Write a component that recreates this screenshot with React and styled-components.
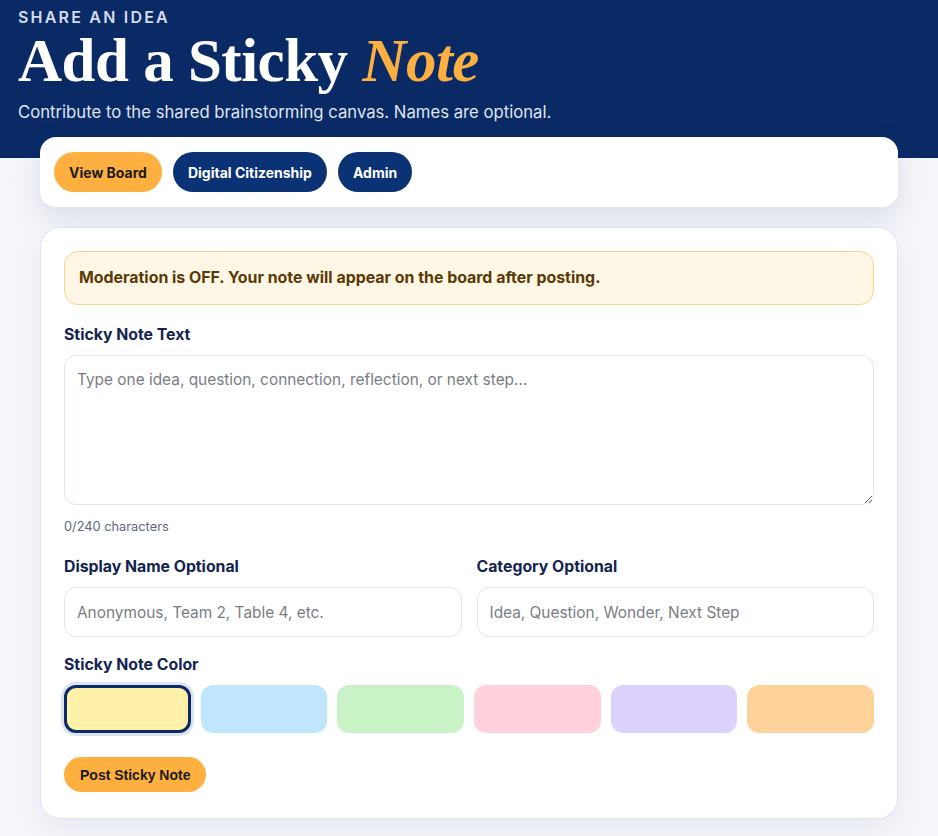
import { useState } from "react";
import styled, { createGlobalStyle } from "styled-components";

const GlobalStyle = createGlobalStyle`
  * { box-sizing: border-box; }
  body {
    margin: 0;
    background: #f5f6fb;
    font-family: "Inter", "Noto Sans", sans-serif;
    color: #13244f;
  }
`;

const Hero = styled.header`
  background: #0a2a66;
  padding: 7px 18px 36px;
`;

const Eyebrow = styled.div`
  font-size: 16px;
  font-weight: 600;
  letter-spacing: 2.2px;
  color: #d5dcec;
  text-transform: uppercase;
  line-height: 20px;
`;

const Title = styled.h1`
  margin: 2px 0 0;
  font-family: "Liberation Serif", "DejaVu Serif", serif;
  font-size: 61px;
  font-weight: 700;
  line-height: 64px;
  color: #ffffff;
  letter-spacing: -0.5px;

  em {
    color: #fdb03f;
    font-style: italic;
  }
`;

const Subtitle = styled.p`
  margin: 9px 0 0;
  font-size: 16.7px;
  color: #dfe5f2;
  line-height: 20px;
`;

const Main = styled.main`
  margin: -21px 40px 0;
  display: flex;
  flex-direction: column;
  gap: 20px;
  padding-bottom: 18px;
`;

const NavCard = styled.nav`
  background: #ffffff;
  border-radius: 16px;
  padding: 15px 14px;
  display: flex;
  gap: 11px;
  box-shadow: 0 10px 30px rgba(20, 40, 90, 0.12);
`;

const NavButton = styled.button`
  height: 40px;
  padding: 0 15px;
  border: none;
  border-radius: 20px;
  font-family: "Inter", "Noto Sans", sans-serif;
  font-size: 14px;
  font-weight: 700;
  background: ${(p) => (p.$accent ? "#fdb03f" : "#0b3275")};
  color: ${(p) => (p.$accent ? "#1c1a17" : "#ffffff")};
  cursor: pointer;
`;

const FormCard = styled.section`
  background: #ffffff;
  border: 1px solid #dde4f3;
  border-radius: 20px;
  padding: 23px 23px 26px;
  box-shadow: 0 10px 30px rgba(20, 40, 90, 0.06);
`;

const Alert = styled.div`
  background: #fff7e6;
  border: 1px solid #f7d58a;
  border-radius: 14px;
  padding: 16px 14px;
  font-size: 15.9px;
  font-weight: 700;
  color: #5a3a05;
  line-height: 20px;
`;

const Field = styled.div`
  display: flex;
  flex-direction: column;
  margin-top: ${(p) => p.$top || 0}px;
  min-width: 0;
`;

const Label = styled.label`
  font-size: 15.8px;
  font-weight: 700;
  color: #13244f;
  line-height: 20px;
  margin-bottom: 10px;
`;

const TextArea = styled.textarea`
  height: 150px;
  resize: vertical;
  border: 1px solid #dde4f3;
  border-radius: 12px;
  padding: 14px 12px;
  font-family: "Inter", "Noto Sans", sans-serif;
  font-size: 15.4px;
  color: #13244f;
  outline: none;

  &::placeholder { color: #7a7d85; }
`;

const Counter = styled.div`
  margin-top: 14px;
  font-size: 12.8px;
  color: #5d6a84;
`;

const Row = styled.div`
  display: grid;
  grid-template-columns: 1fr 1fr;
  gap: 15px;
  margin-top: 23px;
`;

const Input = styled.input`
  height: 50px;
  border: 1px solid #dde4f3;
  border-radius: 12px;
  padding: 0 12px;
  font-family: "Inter", "Noto Sans", sans-serif;
  font-size: 15.4px;
  color: #13244f;
  outline: none;

  &::placeholder { color: #7a7d85; }
`;

const Swatches = styled.div`
  display: grid;
  grid-template-columns: repeat(6, 1fr);
  gap: 10px;
`;

const Swatch = styled.button`
  height: 48px;
  border-radius: 12px;
  border: ${(p) => (p.$selected ? "3px solid #0b2a66" : "none")};
  box-shadow: ${(p) => (p.$selected ? "0 0 0 3px #dde3ee" : "none")};
  background: ${(p) => p.$color};
  cursor: pointer;
  padding: 0;
`;

const Submit = styled.button`
  margin-top: 24px;
  height: 35px;
  padding: 0 16px;
  border: none;
  border-radius: 18px;
  background: #fdb03f;
  color: #1c1a17;
  font-family: "Liberation Sans", Arial, sans-serif;
  font-size: 14px;
  font-weight: 700;
  cursor: pointer;
`;

const colors = ["#fff2a8", "#c0e6fd", "#c9f3c6", "#ffd1dc", "#ddd1fd", "#fdd39b"];

export default function App() {
  const [text, setText] = useState("");
  const [selected, setSelected] = useState(0);

  return (
    <>
      <GlobalStyle />
      <Hero>
        <Eyebrow>Share an idea</Eyebrow>
        <Title>
          Add a Sticky <em>Note</em>
        </Title>
        <Subtitle>Contribute to the shared brainstorming canvas. Names are optional.</Subtitle>
      </Hero>
      <Main>
        <NavCard>
          <NavButton $accent>View Board</NavButton>
          <NavButton>Digital Citizenship</NavButton>
          <NavButton>Admin</NavButton>
        </NavCard>
        <FormCard>
          <Alert>Moderation is OFF. Your note will appear on the board after posting.</Alert>
          <Field $top={20}>
            <Label>Sticky Note Text</Label>
            <TextArea
              maxLength={240}
              value={text}
              onChange={(e) => setText(e.target.value)}
              placeholder="Type one idea, question, connection, reflection, or next step..."
            />
            <Counter>{text.length}/240 characters</Counter>
          </Field>
          <Row>
            <Field>
              <Label>Display Name Optional</Label>
              <Input placeholder="Anonymous, Team 2, Table 4, etc." />
            </Field>
            <Field>
              <Label>Category Optional</Label>
              <Input placeholder="Idea, Question, Wonder, Next Step" />
            </Field>
          </Row>
          <Field $top={18}>
            <Label>Sticky Note Color</Label>
            <Swatches>
              {colors.map((c, i) => (
                <Swatch key={c} $color={c} $selected={i === selected} onClick={() => setSelected(i)} />
              ))}
            </Swatches>
          </Field>
          <Submit>Post Sticky Note</Submit>
        </FormCard>
      </Main>
    </>
  );
}
